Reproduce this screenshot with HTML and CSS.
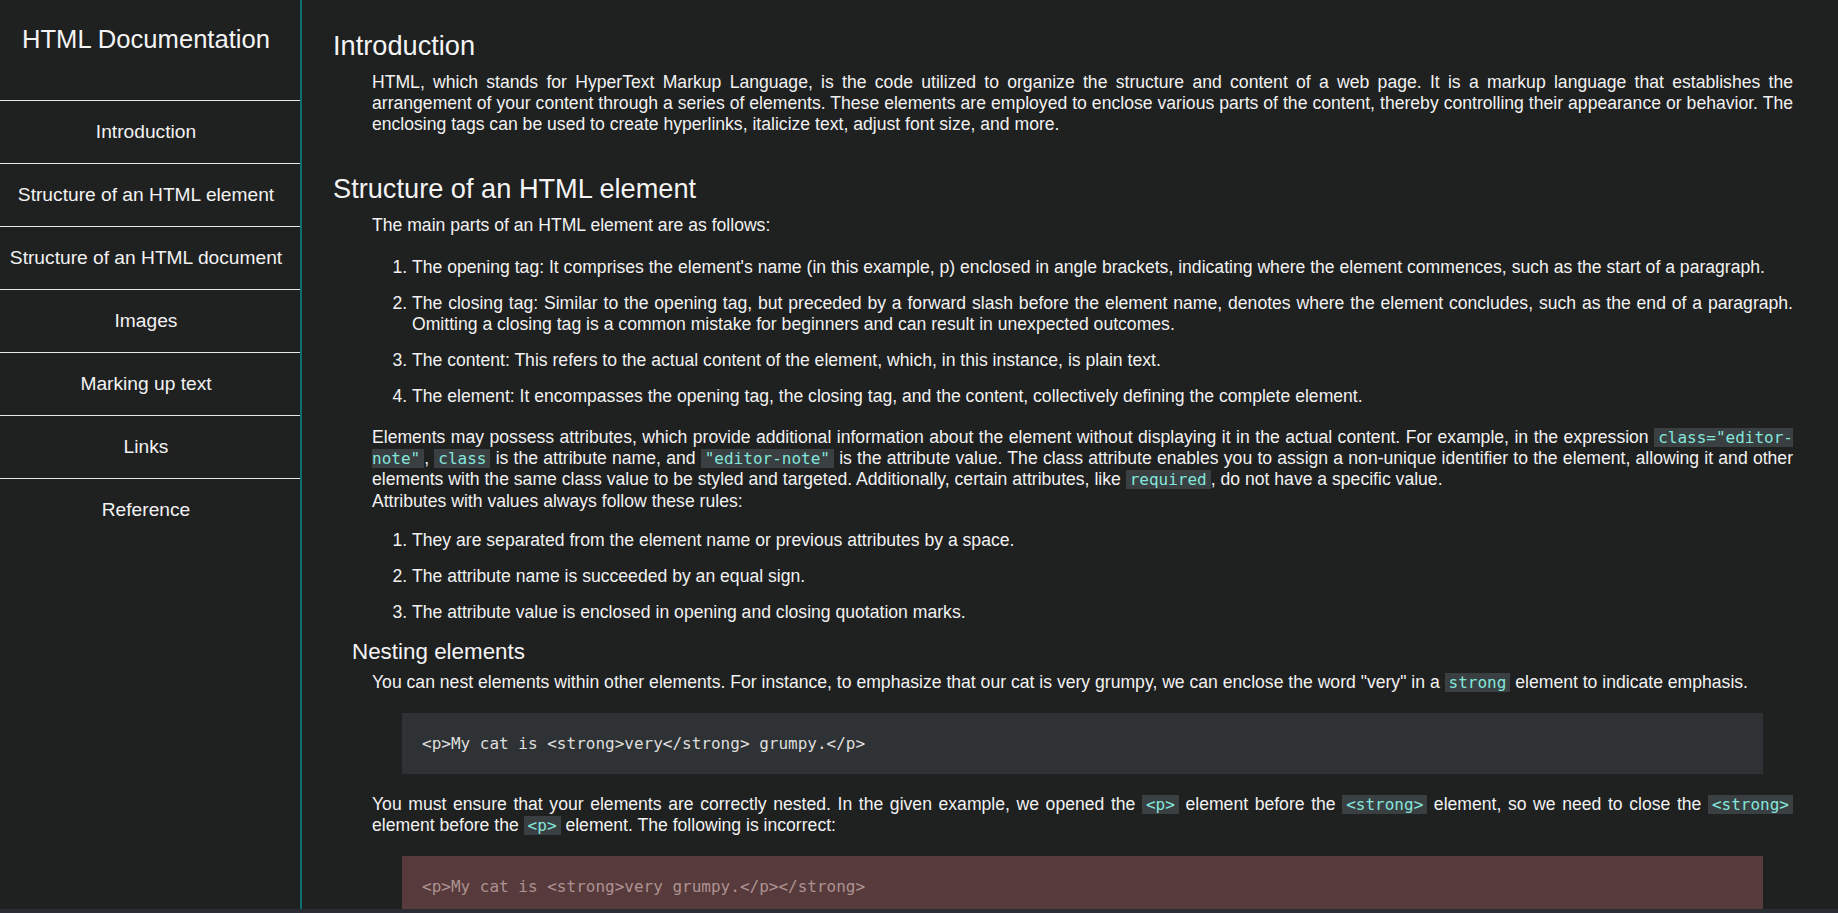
FILE: index.html
```html
<!DOCTYPE html>
<html lang="en">
<head>
<meta charset="utf-8">
<title>HTML Documentation</title>
<link rel="stylesheet" href="styles.css">
</head>
<body>
<div class="page">
  <div class="layout">
    <nav class="sidebar" id="navbar">
      <header class="sidebar-header"><h1 class="sidebar-title">HTML Documentation</h1></header>
      <ul class="nav-list">
        <li class="nav-item"><a class="nav-link" href="#Introduction">Introduction</a></li>
        <li class="nav-item"><a class="nav-link" href="#Structure_of_an_HTML_element">Structure of an HTML element</a></li>
        <li class="nav-item"><a class="nav-link" href="#Structure_of_an_HTML_document">Structure of an HTML document</a></li>
        <li class="nav-item"><a class="nav-link" href="#Images">Images</a></li>
        <li class="nav-item"><a class="nav-link" href="#Marking_up_text">Marking up text</a></li>
        <li class="nav-item"><a class="nav-link" href="#Links">Links</a></li>
        <li class="nav-item"><a class="nav-link" href="#Reference">Reference</a></li>
      </ul>
    </nav>
    <main class="main" id="main-doc">
      <section class="doc-section" id="Introduction">
        <h2 class="section-title">Introduction</h2>
        <div class="section-body">
          <p class="text">HTML, which stands for HyperText Markup Language, is the code utilized to organize the structure and content of a web page. It is a markup language that establishes the arrangement of your content through a series of elements. These elements are employed to enclose various parts of the content, thereby controlling their appearance or behavior. The enclosing tags can be used to create hyperlinks, italicize text, adjust font size, and more.</p>
        </div>
      </section>
      <section class="doc-section" id="Structure_of_an_HTML_element">
        <h2 class="section-title">Structure of an HTML element</h2>
        <div class="section-body">
          <p class="text">The main parts of an HTML element are as follows:</p>
          <ol class="steps">
            <li>The opening tag: It comprises the element's name (in this example, p) enclosed in angle brackets, indicating where the element commences, such as the start of a paragraph.</li>
            <li>The closing tag: Similar to the opening tag, but preceded by a forward slash before the element name, denotes where the element concludes, such as the end of a paragraph. Omitting a closing tag is a common mistake for beginners and can result in unexpected outcomes.</li>
            <li>The content: This refers to the actual content of the element, which, in this instance, is plain text.</li>
            <li>The element: It encompasses the opening tag, the closing tag, and the content, collectively defining the complete element.</li>
          </ol>
          <p class="text">Elements may possess attributes, which provide additional information about the element without displaying it in the actual content. For example, in the expression <code class="inline-code">class="editor-note"</code>, <code class="inline-code">class</code> is the attribute name, and <code class="inline-code">"editor-note"</code> is the attribute value. The class attribute enables you to assign a non-unique identifier to the element, allowing it and other elements with the same class value to be styled and targeted. Additionally, certain attributes, like <code class="inline-code">required</code>, do not have a specific value.<br>Attributes with values always follow these rules:</p>
          <ol class="steps steps--rules">
            <li>They are separated from the element name or previous attributes by a space.</li>
            <li>The attribute name is succeeded by an equal sign.</li>
            <li>The attribute value is enclosed in opening and closing quotation marks.</li>
          </ol>
        </div>
        <div class="subsection">
          <h3 class="subsection-title">Nesting elements</h3>
          <div class="subsection-body">
            <p class="text">You can nest elements within other elements. For instance, to emphasize that our cat is very grumpy, we can enclose the word "very" in a <code class="inline-code">strong</code> element to indicate emphasis.</p>
            <pre class="code-block">&lt;p&gt;My cat is &lt;strong&gt;very&lt;/strong&gt; grumpy.&lt;/p&gt;</pre>
            <p class="text">You must ensure that your elements are correctly nested. In the given example, we opened the <code class="inline-code">&lt;p&gt;</code> element before the <code class="inline-code">&lt;strong&gt;</code> element, so we need to close the <code class="inline-code">&lt;strong&gt;</code> element before the <code class="inline-code">&lt;p&gt;</code> element. The following is incorrect:</p>
            <pre class="code-block code-block--wrong">&lt;p&gt;My cat is &lt;strong&gt;very grumpy.&lt;/p&gt;&lt;/strong&gt;</pre>
          </div>
        </div>
      </section>
    </main>
  </div>
  <div class="bottom-strip"></div>
</div>
</body>
</html>
```
FILE: styles.css
```css
* { box-sizing: border-box; }

html, body {
  margin: 0;
  height: 100%;
}

body {
  background: #1f2020;
  color: #f2f2f2;
  font-family: "Liberation Sans", Arial, sans-serif;
  overflow: hidden;
}

.page {
  height: 100vh;
  display: flex;
  flex-direction: column;
}

.layout {
  flex: 1;
  display: flex;
  min-height: 0;
}

/* Sidebar */
.sidebar {
  width: 302px;
  flex: none;
  border-right: 2px solid #0c7070;
}

.sidebar-header {
  height: 100px;
  padding-top: 25px;
  padding-right: 8px;
  text-align: center;
}

.sidebar-title {
  margin: 0;
  font-size: 25.6px;
  font-weight: normal;
  line-height: normal;
  color: #f4f4f4;
}

.nav-list {
  list-style: none;
  margin: 0;
  padding: 0;
}

.nav-item {
  height: 63px;
  border-top: 1px solid #e8e8e8;
  display: flex;
  align-items: center;
  justify-content: center;
  padding-right: 8px;
}

.nav-link {
  color: #f2f2f2;
  text-decoration: none;
  font-size: 19.2px;
}

/* Main */
.main {
  flex: 1;
  min-width: 0;
  padding: 30px 45px 0 31px;
  overflow: hidden;
  font-size: 17.6px;
  line-height: 1.2;
}

.doc-section + .doc-section {
  margin-top: 38px;
}

.section-title {
  margin: 0 0 9px;
  font-size: 27.2px;
  font-weight: normal;
  line-height: 1.2;
  color: #f4f4f4;
}

.section-body {
  padding-left: 39px;
  display: flex;
  flex-direction: column;
  gap: 20px;
}

.section-body > .text + .steps {
  margin-top: 1px;
}

.section-body > .text + .steps--rules {
  margin-top: -2px;
}

.text {
  margin: 0;
  text-align: justify;
}

.steps {
  margin: 0;
  padding-left: 40px;
}

.steps li {
  text-align: justify;
}

.steps li + li {
  margin-top: 15px;
}

.subsection {
  margin-top: 16px;
  padding-left: 19px;
}

.subsection-title {
  margin: 0 0 6px;
  font-size: 22.4px;
  font-weight: normal;
  line-height: 1.2;
  color: #f4f4f4;
}

.subsection-body {
  padding-left: 20px;
  display: flex;
  flex-direction: column;
  gap: 20px;
}

.inline-code {
  font-family: "DejaVu Sans Mono", "Liberation Mono", monospace;
  font-size: 16px;
  line-height: 1;
  padding: 0 4px;
  background: #3a3f41;
  color: #84e6dc;
}

.code-block {
  margin: 0 30px;
  padding: 20px;
  background: #2f3234;
  color: #dedede;
  font-family: "DejaVu Sans Mono", "Liberation Mono", monospace;
  font-size: 16px;
  line-height: 21px;
  white-space: pre;
}

.code-block--wrong {
  background: #573a3b;
  color: #ad9292;
}

.bottom-strip {
  height: 4px;
  flex: none;
  background: #2b2d34;
}
```
